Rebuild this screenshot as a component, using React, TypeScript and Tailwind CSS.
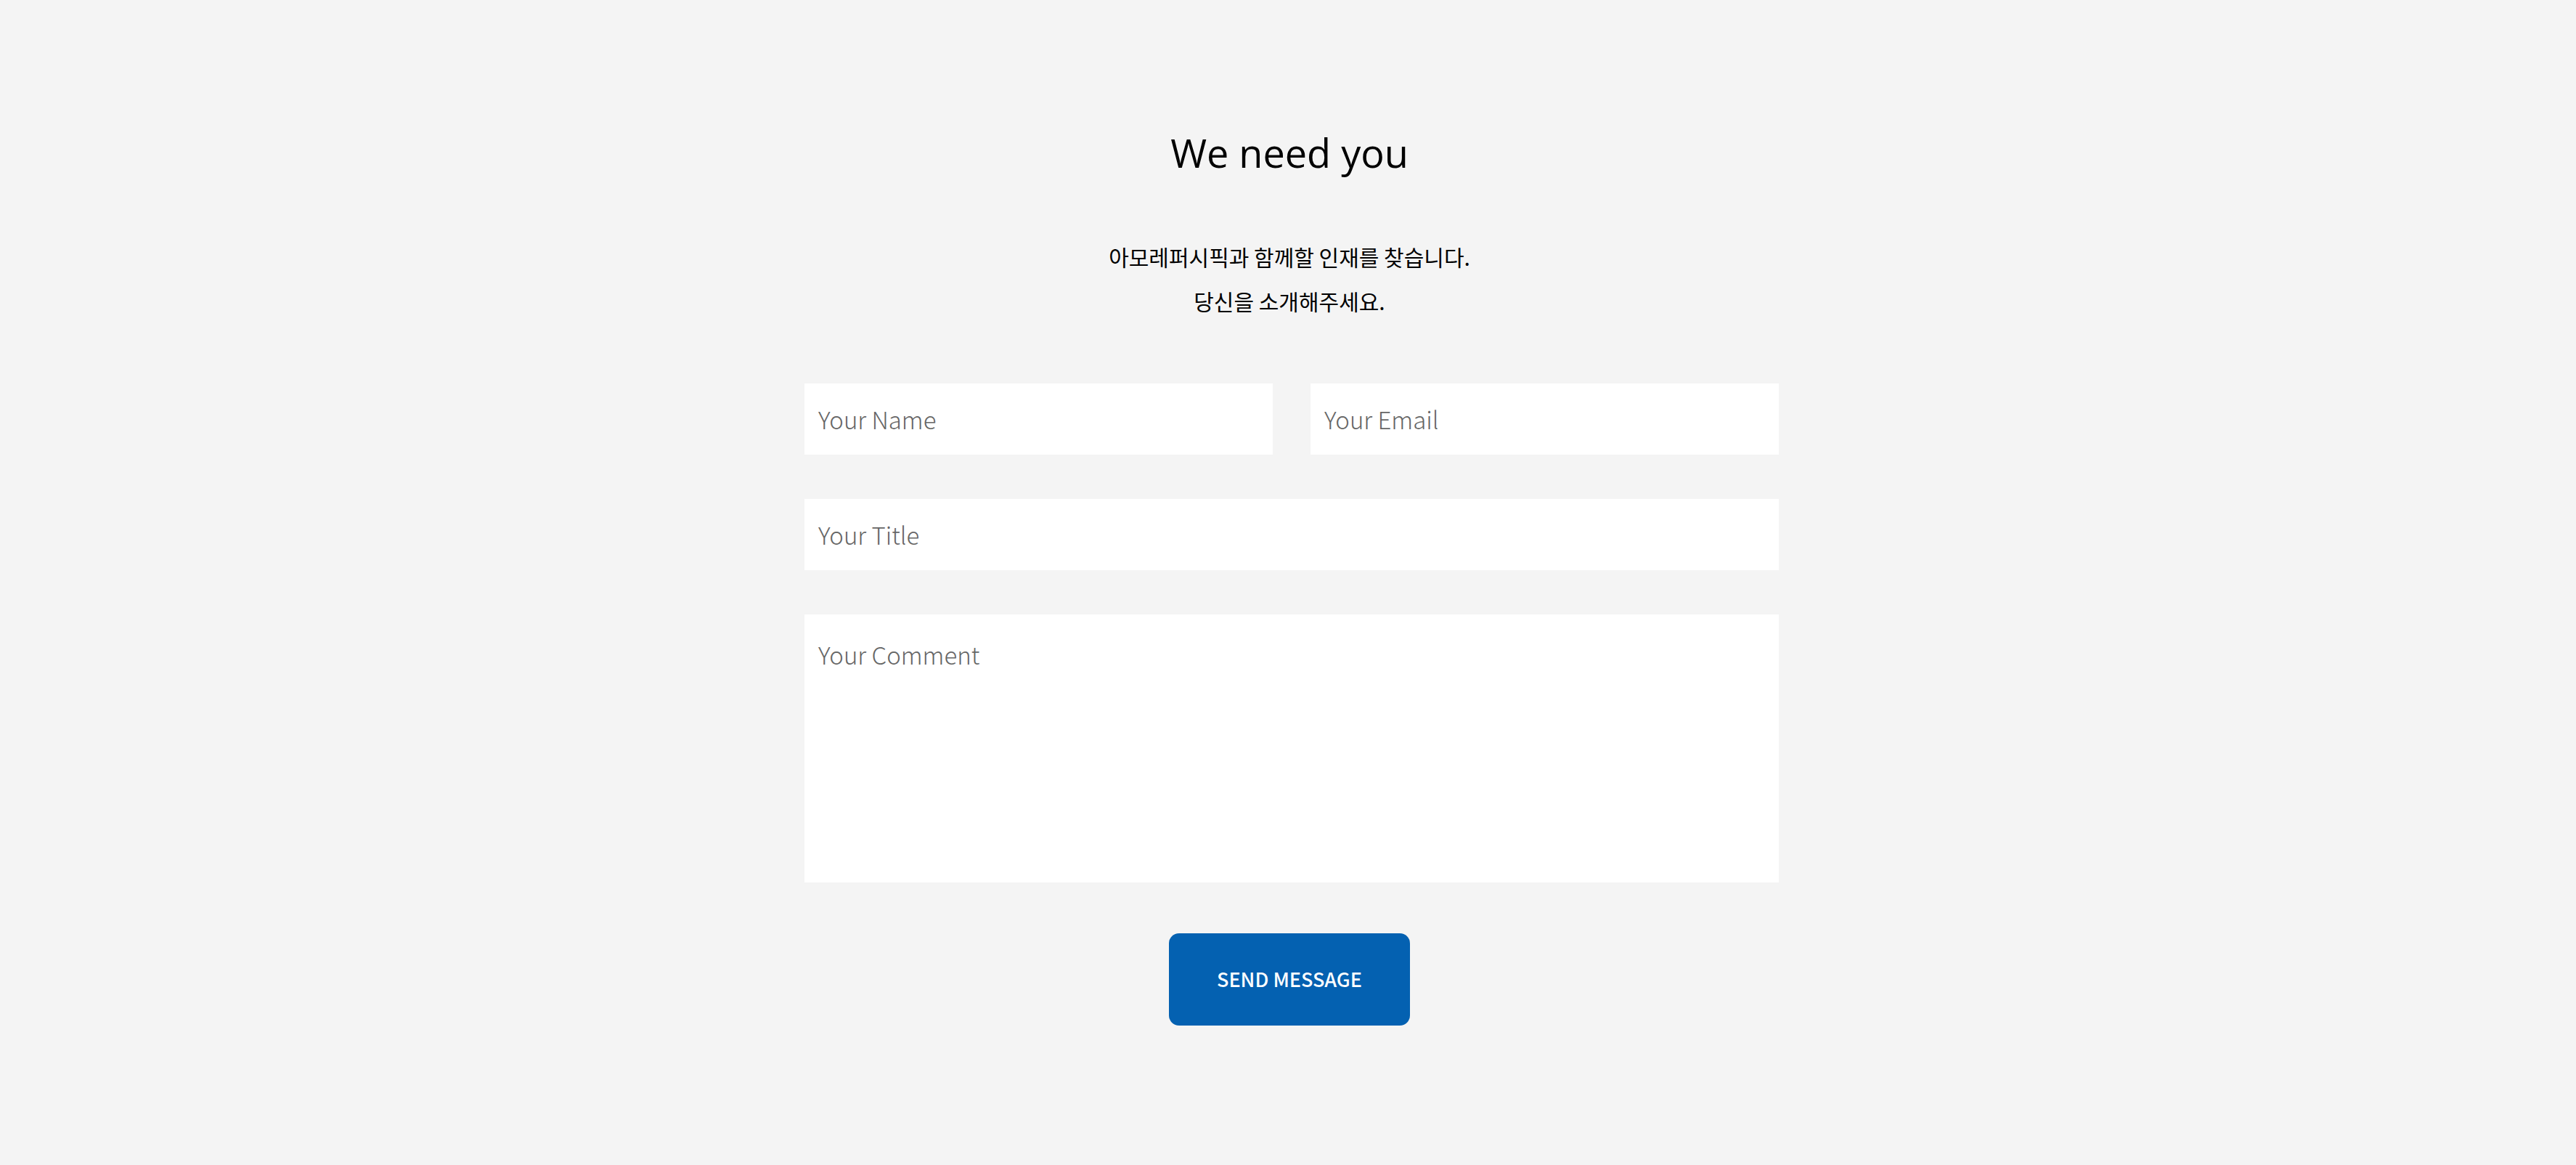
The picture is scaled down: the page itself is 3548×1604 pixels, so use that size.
export default function App() {
  return (
    <div className="min-h-[1604px] w-full bg-[#f4f4f4] font-['Noto_Sans_CJK_KR',sans-serif]">
      <section className="ml-[calc(50%-666px)] flex w-[1342px] flex-col items-center pt-[176px]">
        <h1 className="-ml-[6px] font-['Open_Sans','Noto_Sans_CJK_KR',sans-serif] text-[54px] leading-[68px] text-black">
          We need you
        </h1>

        <div className="-ml-[6px] mt-[79px] text-center text-[30px] leading-[61px] text-black">
          <p>아모레퍼시픽과 함께할 인재를 찾습니다.</p>
          <p>당신을 소개해주세요.</p>
        </div>

        <form className="mt-[83px] flex w-full flex-col gap-[61px]">
          <div className="grid grid-cols-2 gap-[52px]">
            <input
              type="text"
              placeholder="Your Name"
              className="h-[98px] bg-white px-[19px] text-[33px] font-light text-[#333] outline-none placeholder:text-[#666]"
            />
            <input
              type="email"
              placeholder="Your Email"
              className="h-[98px] bg-white px-[19px] text-[33px] font-light text-[#333] outline-none placeholder:text-[#666]"
            />
          </div>
          <input
            type="text"
            placeholder="Your Title"
            className="h-[98px] bg-white px-[19px] text-[33px] font-light text-[#333] outline-none placeholder:text-[#666]"
          />
          <textarea
            placeholder="Your Comment"
            className="h-[369px] resize-none bg-white px-[19px] pt-[30px] text-[33px] leading-[50px] font-light text-[#333] outline-none placeholder:text-[#666]"
          />
          <div className="-ml-[6px] mt-[9px] flex justify-center">
            <button
              type="button"
              className="h-[127px] w-[332px] rounded-[14px] bg-[#0461b1] text-[27px] font-medium text-white"
            >
              SEND MESSAGE
            </button>
          </div>
        </form>
      </section>
    </div>
  );
}
